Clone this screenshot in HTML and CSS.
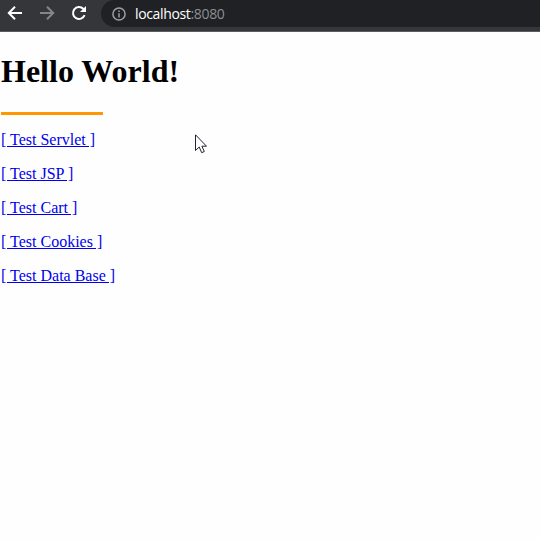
FILE: index.html
```html
<!DOCTYPE html>
<html lang="en">
<head>
<meta charset="utf-8">
<title>localhost:8080</title>
<link rel="stylesheet" href="styles.css">
</head>
<body>
<header class="toolbar">
  <nav class="controls">
    <svg class="icon" viewBox="0 0 16 16"><path d="M15 8H2M8 1.8L1.8 8L8 14.2"/></svg>
    <svg class="icon disabled" viewBox="0 0 16 16"><path d="M1 8H14M8 1.8L14.2 8L8 14.2"/></svg>
    <svg class="icon" viewBox="0 0 16 16"><path d="M13.6 10.2A6 6 0 1 1 12.3 3.8L14 5.5"/><path class="solid" d="M15 1V7H9Z"/></svg>
  </nav>
  <div class="address">
    <svg class="info" viewBox="0 0 14 14"><circle cx="7" cy="7" r="6.1"/><path d="M7 6.2V10.4M7 3.5V5"/></svg>
    <span class="url">localhost<span class="port">:8080</span></span>
  </div>
</header>
<main class="page">
  <h1>Hello World!</h1>
  <div class="rule"></div>
  <ul class="links">
    <li><a href="#">[ Test Servlet ]</a></li>
    <li><a href="#">[ Test JSP ]</a></li>
    <li><a href="#">[ Test Cart ]</a></li>
    <li><a href="#">[ Test Cookies ]</a></li>
    <li><a href="#">[ Test Data Base ]</a></li>
  </ul>
</main>
<svg class="cursor" viewBox="0 0 12 20"><path d="M.5 .8V16.5L4.2 13L6.7 18.7L9.3 17.5L6.9 12.2H11.5Z"/></svg>
</body>
</html>
```
FILE: styles.css
```css
body {
  margin: 0;
  height: 540px;
  overflow: hidden;
  background: #fefefe;
  color: #000;
  font-family: "Liberation Serif", serif;
  font-size: 16px;
}
.toolbar {
  box-sizing: border-box;
  display: flex;
  align-items: flex-start;
  height: 32px;
  background: #35363a;
  border-bottom: 1px solid #5b5c60;
}
.controls {
  display: flex;
  gap: 16px;
  width: 94px;
  padding: 5px 0 0 7px;
}
.icon {
  width: 16px;
  height: 16px;
  fill: none;
  stroke: #fff;
  stroke-width: 2;
}
.disabled { stroke: #85868a; }
.icon .solid { fill: #fff; stroke: none; }
.address {
  box-sizing: border-box;
  flex: 1;
  display: flex;
  align-items: center;
  gap: 9px;
  height: 27px;
  padding-left: 11px;
  border-radius: 14px 0 0 14px;
  background: #202124;
}
.info {
  width: 14px;
  height: 14px;
  fill: none;
  stroke: #9aa0a6;
  stroke-width: 1.5;
}
.url {
  color: #fff;
  font: 14px/20px "Open Sans", sans-serif;
  letter-spacing: -.35px;
}
.port { color: #8b8f94; }
.page { padding: 21px 1px 0; }
h1 {
  margin: 0;
  font-size: 32px;
  line-height: 37px;
}
.rule {
  width: 102px;
  height: 3px;
  margin-top: 22px;
  background: #ff9800;
}
.links {
  display: grid;
  gap: 16px;
  margin: 16px 0 0;
  padding: 0;
  list-style: none;
  line-height: 18px;
}
.links a { color: #0000ee; }
.cursor {
  position: absolute;
  left: 195px;
  top: 134px;
  width: 12px;
  height: 20px;
  fill: #fff;
  stroke: #222231;
}
```
